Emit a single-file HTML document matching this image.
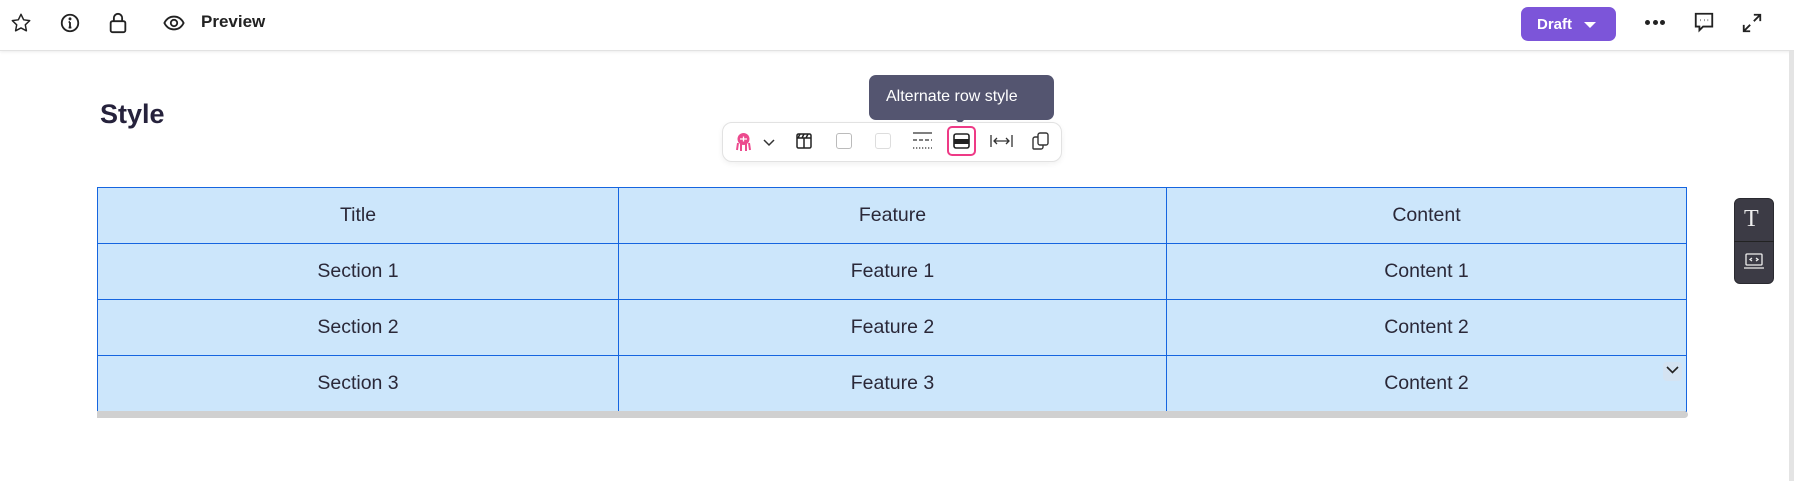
<!DOCTYPE html>
<html><head><style>
*{margin:0;padding:0;box-sizing:border-box}
body{width:1794px;height:481px;background:#fff;font-family:"Liberation Sans",sans-serif;color:#24223a;position:relative;overflow:hidden}
.top{position:absolute;left:0;top:0;width:1794px;height:51px;border-bottom:1px solid #e2e2e2;box-shadow:0 1px 3px rgba(0,0,0,.08)}
.abs{position:absolute}
svg{display:block}
table{position:absolute;left:97px;top:187px;width:1590px;height:224px;border-collapse:collapse;background:#cce6fb}
td{border:1px solid #1565e0;text-align:center;font-size:19.5px;color:#2a2838;height:56px}
</style></head><body>
<div class="top">
 <svg class="abs" style="left:10px;top:12px" width="22" height="22" viewBox="0 0 24 24" fill="none" stroke="#222" stroke-width="1.6" stroke-linejoin="round"><path d="M12 2.5l2.9 6 6.6.9-4.8 4.6 1.2 6.5L12 17.4 6.1 20.5l1.2-6.5L2.5 9.4l6.6-.9z"/></svg>
 <svg class="abs" style="left:59px;top:12px" width="22" height="22" viewBox="0 0 24 24" fill="none" stroke="#222" stroke-width="2"><circle cx="12" cy="12" r="9"/><path d="M12 11v6M10.5 11H12M10.5 17h3"/><circle cx="12" cy="7.5" r=".6" fill="#222"/></svg>
 <svg class="abs" style="left:107px;top:11px" width="22" height="24" viewBox="0 0 24 26" fill="none" stroke="#222" stroke-width="2"><rect x="4" y="11" width="16" height="12" rx="2"/><path d="M7.5 11V7.5a4.5 4.5 0 019 0V11"/></svg>
 <svg class="abs" style="left:163px;top:13px" width="22" height="20" viewBox="0 0 24 20" fill="none" stroke="#222" stroke-width="2"><path d="M1.5 10C4 5 8 3 12 3s8 2 10.5 7C20 15 16 17 12 17S4 15 1.5 10z"/><circle cx="12" cy="10" r="3.5"/></svg>
 <div class="abs" style="left:201px;top:12px;font-size:17px;font-weight:bold;color:#222">Preview</div>
 <div class="abs" style="left:1521px;top:7px;width:95px;height:34px;background:#7c55d9;border-radius:7px;color:#fff;font-size:15px;font-weight:bold;padding:9px 0 0 16px">Draft<span style="position:absolute;left:63px;top:15px;border:6px solid transparent;border-top:6px solid #fff;border-bottom:0"></span></div>
 <div class="abs" style="left:1645px;top:20px;width:20px;height:6px;display:flex;justify-content:space-between"><i style="width:5px;height:5px;border-radius:50%;background:#222"></i><i style="width:5px;height:5px;border-radius:50%;background:#222"></i><i style="width:5px;height:5px;border-radius:50%;background:#222"></i></div>
 <svg class="abs" style="left:1693px;top:11px" width="22" height="22" viewBox="0 0 24 24" fill="none" stroke="#222" stroke-width="2"><path d="M3 3h18v14H11l-4 4v-4H3z"/><path d="M8 10h.5M12 10h.5M16 10h.5" stroke-width="2.2"/></svg>
 <svg class="abs" style="left:1741px;top:12px" width="22" height="22" viewBox="0 0 24 24" fill="none" stroke="#222" stroke-width="2"><path d="M14 3h7v7M21 3l-7 7M10 21H3v-7M3 21l7-7"/></svg>
</div>
<div class="abs" style="left:1789px;top:51px;width:5px;height:430px;background:#e4e4e4"></div>
<div class="abs" style="left:100px;top:99px;font-size:27px;font-weight:bold;color:#26223c">Style</div>
<div class="abs" style="left:869px;top:75px;width:185px;height:45px;background:#545570;border-radius:7px;color:#fff;font-size:16px;padding:13px 0 0 17px">Alternate row style</div>
<div class="abs" style="left:955px;top:119px;border:5px solid transparent;border-top:5px solid #545570;border-bottom:0"></div>
<div class="abs" style="left:722px;top:122px;width:340px;height:40px;background:#fff;border:1px solid #e2e2e2;border-radius:10px;box-shadow:0 2px 6px rgba(0,0,0,.06)"></div>
<svg class="abs" style="left:735px;top:132px" width="17" height="20" viewBox="0 0 17 20"><circle cx="8.5" cy="7" r="6" fill="#ec4a8e"/><path d="M3 11l-1 7M6 12l0 7M11 12l0 7M14 11l1 7" stroke="#ec4a8e" stroke-width="2"/><path d="M5 7h7M8.5 4.5v5" stroke="#fff" stroke-width="1.3"/></svg>
<svg class="abs" style="left:763px;top:139px" width="12" height="8" viewBox="0 0 12 8" fill="none" stroke="#333" stroke-width="1.5"><path d="M1 1l5 5 5-5"/></svg>
<svg class="abs" style="left:796px;top:133px" width="16" height="16" viewBox="0 0 16 16" fill="none" stroke="#222" stroke-width="1.5"><rect x="1" y="1" width="14" height="14" rx="1.5"/><path d="M1 5h14M8 5v10M4 1l-2 4M8 1l-2 4M12 1l-2 4"/></svg>
<div class="abs" style="left:836px;top:133px;width:16px;height:16px;border:1px solid #bbb;border-radius:3px"></div>
<div class="abs" style="left:875px;top:133px;width:16px;height:16px;border:1px solid #ddd;border-radius:3px"></div>
<svg class="abs" style="left:913px;top:132px" width="19" height="18" viewBox="0 0 19 18" fill="none" stroke="#333" stroke-width="1.3"><path d="M0 1h19"/><path d="M0 8h19" stroke-dasharray="4 2"/><path d="M0 16h19" stroke-dasharray="1.3 1.7"/></svg>
<div class="abs" style="left:947px;top:126px;width:29px;height:30px;border:2.5px solid #ee3a86;border-radius:5px"></div>
<svg class="abs" style="left:953px;top:133px" width="17" height="16" viewBox="0 0 17 16"><rect x="1" y="1" width="15" height="14" rx="2" fill="none" stroke="#222" stroke-width="1.6"/><rect x="1" y="6" width="15" height="5" fill="#222"/></svg>
<svg class="abs" style="left:990px;top:134px" width="23" height="14" viewBox="0 0 23 14" fill="none" stroke="#333" stroke-width="1.3"><path d="M1 1v12M22 1v12M4 7h15M7 4L4 7l3 3M16 4l3 3-3 3"/></svg>
<svg class="abs" style="left:1032px;top:132px" width="17" height="18" viewBox="0 0 17 18" fill="none" stroke="#333" stroke-width="1.4"><rect x="6" y="1" width="10" height="12" rx="2"/><path d="M6 5H3a2 2 0 00-2 2v9a1 1 0 001 1h7a2 2 0 002-2v-2"/></svg>
<table>
<tr><td style="width:521px">Title</td><td style="width:548px">Feature</td><td>Content</td></tr>
<tr><td>Section 1</td><td>Feature 1</td><td>Content 1</td></tr>
<tr><td>Section 2</td><td>Feature 2</td><td>Content 2</td></tr>
<tr><td>Section 3</td><td>Feature 3</td><td>Content 2</td></tr>
</table>
<div class="abs" style="left:1663px;top:362px;width:19px;height:19px;background:#d4e3f2;border-radius:4px"></div>
<svg class="abs" style="left:1666px;top:366px" width="13" height="8" viewBox="0 0 13 8" fill="none" stroke="#222" stroke-width="1.6"><path d="M1 1l5.5 5.5L12 1"/></svg>
<div class="abs" style="left:97px;top:411px;width:1591px;height:7px;background:#d0d0d0;border-radius:0 4px 4px 0"></div>
<div class="abs" style="left:1734px;top:198px;width:40px;height:86px;background:#3c3b45;border-radius:6px;border:1px solid #2a2a30"></div>
<div class="abs" style="left:1734px;top:241px;width:40px;height:1px;background:#222"></div>
<div class="abs" style="left:1744px;top:206px;color:#eee;font-size:24px;font-family:'Liberation Serif',serif">T</div>
<svg class="abs" style="left:1743px;top:253px" width="22" height="17" viewBox="0 0 22 17" fill="none" stroke="#eee" stroke-width="1.3"><rect x="3" y="1" width="16" height="11" rx="1"/><path d="M1 15h20"/><path d="M9 5l-2 1.5L9 8M13 5l2 1.5L13 8"/></svg>
</body></html>
